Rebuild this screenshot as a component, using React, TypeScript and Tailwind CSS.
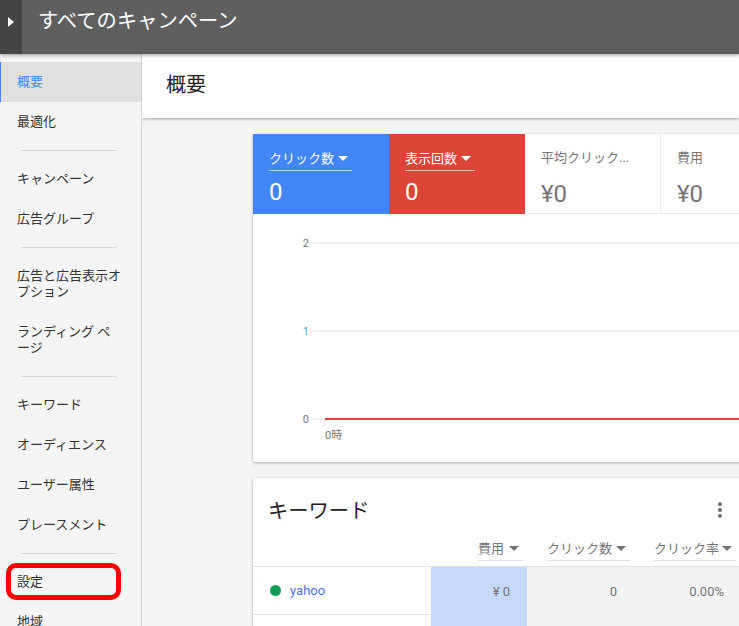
import { MoreVertical } from "lucide-react"

const font = "font-['Roboto','Noto_Sans_CJK_JP',sans-serif]"

function NavItem({ label, active }: { label: string; active?: boolean }) {
  return (
    <div
      className={`h-10 flex items-center text-[13px] pb-px ${
        active ? "bg-[#e0e0e0] text-[#4285f4] border-l border-[#4285f4] pl-4" : "text-[#333333] pl-[17px]"
      }`}
    >
      {label}
    </div>
  )
}

function NavDivider({ className }: { className: string }) {
  return <div className={`ml-[21px] w-[96px] h-px bg-[#d8d8d8] ${className}`}></div>
}

function Caret({ className }: { className: string }) {
  return <span className={`inline-block w-0 h-0 border-x-[5px] border-x-transparent border-t-[5px] ${className}`}></span>
}

function Metric({ label, value, color }: { label: string; value: string; color: string }) {
  return (
    <div className={`w-[136px] h-20 pt-3 pl-4 text-white ${color}`}>
      <div className="inline-flex items-center gap-[4px] h-[23px] pr-[4px] border-b border-white/60 text-[13px] leading-[17px]">
        {label}
        <Caret className="border-t-white" />
      </div>
      <div className="mt-[7px] text-[24px] leading-7">{value}</div>
    </div>
  )
}

function PlainMetric({ label, value }: { label: string; value: string }) {
  return (
    <div className="w-[136px] h-20 pt-4 pl-4 bg-white text-[#757575] border-r border-b border-[#ececec]">
      <div className="h-[19px] text-[13px] leading-4">{label}</div>
      <div className="mt-[11px] text-[24px] leading-7">{value}</div>
    </div>
  )
}

function Chart() {
  return (
    <svg className="block" width="486" height="248" viewBox="0 0 486 248">
      <g fill="none" strokeWidth="2">
        <path d="M60 29H486" stroke="#eeeeee" />
        <path d="M60 117H486" stroke="#eeeeee" />
        <path d="M60 205H72M72 205V211" stroke="#eeeeee" />
        <path d="M72 205H486" stroke="#db4437" />
      </g>
      <g fontSize="11" textAnchor="end">
        <text x="56" y="33" fill="#757575">2</text>
        <text x="56" y="121" fill="#5a9bd5">1</text>
        <text x="56" y="209" fill="#757575">0</text>
      </g>
      <text x="72" y="225" fontSize="11" fill="#757575">0時</text>
    </svg>
  )
}

function ColHead({ label, className }: { label: string; className: string }) {
  return (
    <div className={`flex justify-end items-center ${className}`}>
      <div className="flex items-center justify-between h-[22px] pr-[4px] pb-[2px] border-b border-[#e0e0e0] text-[13px] text-[#757575] w-full">
        {label}
        <Caret className="border-t-[#757575]" />
      </div>
    </div>
  )
}

export default function App() {
  return (
    <div className={`relative h-[626px] w-[739px] overflow-hidden bg-[#f5f5f5] flex flex-col ${font}`}>
      <header className="h-[54px] shrink-0 flex items-stretch bg-[#5f5f5f] shadow-[0_1px_4px_rgba(0,0,0,0.4)] z-20">
        <div className="w-[22px] bg-[#444444] flex items-start justify-center pt-[17px]">
          <span className="w-0 h-0 border-y-[5px] border-y-transparent border-l-[6px] border-l-white"></span>
        </div>
        <h1 className="ml-[16px] mt-[7px] text-[20.3px] leading-7 text-white font-normal">すべてのキャンペーン</h1>
      </header>

      <div className="flex flex-1 min-h-0">
        <nav className="w-[142px] shrink-0 pt-2 bg-[#f5f5f5] border-r border-[#d5d5d5]">
          <NavItem label="概要" active />
          <NavItem label="最適化" />
          <NavDivider className="mt-2 mb-2" />
          <NavItem label="キャンペーン" />
          <NavItem label="広告グループ" />
          <NavDivider className="mt-2 mb-5" />
          <div className="pl-[17px] pr-3 text-[13px] leading-4 text-[#333333]">広告と広告表示オプション</div>
          <div className="pl-[17px] mt-6 text-[13px] leading-4 text-[#333333]">
            ランディング ペ<br />ージ
          </div>
          <NavDivider className="mt-5 mb-2" />
          <NavItem label="キーワード" />
          <NavItem label="オーディエンス" />
          <NavItem label="ユーザー属性" />
          <NavItem label="プレースメント" />
          <NavDivider className="mt-2 mb-2" />
          <NavItem label="設定" />
          <NavItem label="地域" />
        </nav>

        <main className="flex-1 min-w-0 overflow-hidden">
          <div className="h-16 flex items-center pl-6 pb-[2px] bg-white shadow-[0_1px_3px_rgba(0,0,0,0.35)] text-[20px] text-[#212121]">概要</div>

          <div className="ml-[111px] w-[600px] mt-4 bg-white rounded-[2px] shadow-[0_1px_3px_rgba(0,0,0,0.35)]">
            <div className="flex">
              <Metric label="クリック数" value="0" color="bg-[#4285f4]" />
              <Metric label="表示回数" value="0" color="bg-[#db4437]" />
              <PlainMetric label="平均クリック..." value="¥0" />
              <PlainMetric label="費用" value="¥0" />
            </div>
            <Chart />
          </div>

          <div className="ml-[111px] w-[600px] mt-4 bg-white rounded-[2px] shadow-[0_1px_3px_rgba(0,0,0,0.35)]">
            <div className="h-[56px] flex items-center justify-between pl-[15px] pr-[123px]">
              <h2 className="text-[20.3px] font-normal text-[#212121] mt-[11px]">キーワード</h2>
              <MoreVertical size={20} strokeWidth={2.6} className="text-[#616161] mt-[8px]" />
            </div>
            <div className="flex h-[33px] border-b border-[#e0e0e0]">
              <div className="w-[225px]"></div>
              <ColHead label="費用" className="w-[45px] mr-6" />
              <ColHead label="クリック数" className="w-[83px] mr-6" />
              <ColHead label="クリック率" className="w-[82px]" />
            </div>
            <div className="flex h-[60px]">
              <div className="w-[178px] h-12 flex items-center pl-[17px] gap-[9px] border-b border-[#e0e0e0] text-[13px] text-[#4f6fdc]">
                <span className="w-[11px] h-[11px] rounded-full bg-[#0f9d58]"></span>
                yahoo
              </div>
              <div className="w-[96px] pt-[15px] pr-[17px] text-right bg-[#c6d9f8] text-[13px] text-[#757575]">¥ 0</div>
              <div className="w-[107px] pt-[15px] pr-[17px] text-right bg-[#f3f3f3] text-[13px] text-[#757575]">0</div>
              <div className="w-[219px] pt-[15px] pr-[129px] text-right bg-[#f3f3f3] text-[13px] text-[#757575]">0.00%</div>
            </div>
          </div>
        </main>
      </div>

      <div className="absolute left-[6px] top-[563px] w-[115px] h-[37px] border-[5px] border-[#ff0000] rounded-[10px]"></div>
    </div>
  )
}
